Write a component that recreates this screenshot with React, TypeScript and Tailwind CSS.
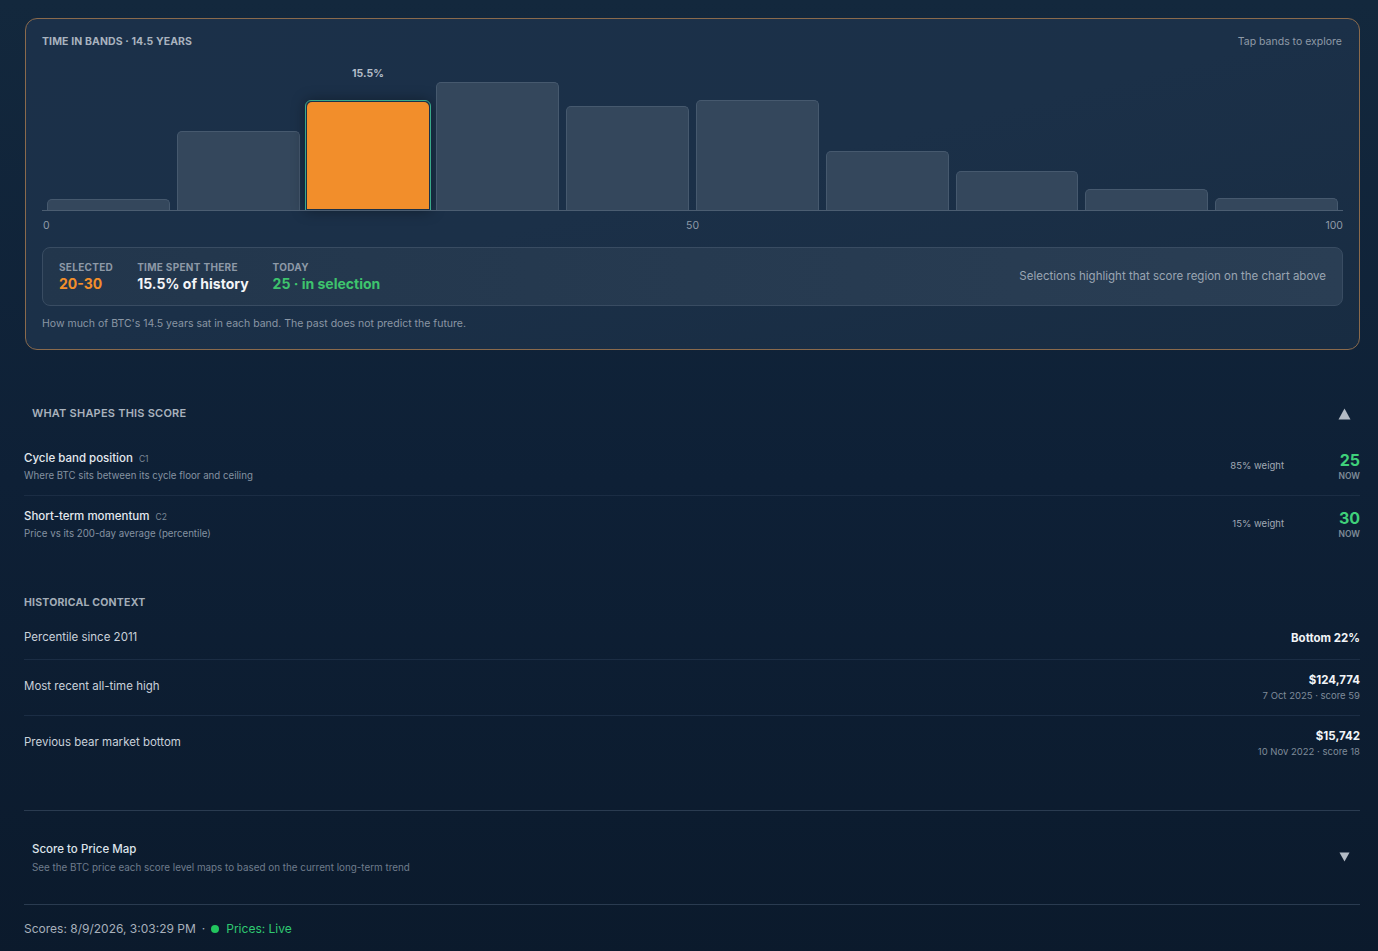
import React from "react";

const bands = [
  { h: 12 },
  { h: 80 },
  { h: 107, selected: true, label: "15.5%" },
  { h: 129 },
  { h: 105 },
  { h: 111 },
  { h: 60 },
  { h: 40 },
  { h: 22 },
  { h: 13 },
];

function Bands() {
  return (
    <div className="relative mt-[7px] h-[154px]">
      <div className="absolute inset-x-0 bottom-0 h-px bg-[#4b5d71]" />
      <div className="flex h-full items-end gap-[7px] px-[5px]">
        {bands.map((b, i) => (
          <div key={i} className="flex flex-1 flex-col items-center justify-end h-full">
            {b.label && (
              <div className="mb-[18px] text-[10.5px] font-bold text-[#b3bdc8]">{b.label}</div>
            )}
            {b.selected ? (
              <div className="w-[calc(100%+4px)] rounded-t-[6px] border border-[#3aa98a] p-[1px] shadow-[0_0_14px_rgba(0,0,0,0.35)]">
                <div className="rounded-t-[5px] bg-[#f28e2b]" style={{ height: b.h }} />
              </div>
            ) : (
              <div
                className="w-full rounded-t-[5px] border-t border-x border-[#46596e] bg-[#34475c]"
                style={{ height: b.h }}
              />
            )}
          </div>
        ))}
      </div>
    </div>
  );
}

function Factor({ name, code, desc, weight, value }: { name: string; code: string; desc: string; weight: string; value: string }) {
  return (
    <div className="flex items-center border-b border-[#1b2d44] py-3 last:border-b-0">
      <div className="flex-1">
        <div className="flex items-baseline gap-[6px] leading-4">
          <span className="text-[11.5px] font-medium text-[#e4e9ef]">{name}</span>
          <span className="text-[8.5px] text-[#7c8896]">{code}</span>
        </div>
        <div className="mt-[2px] text-[9.7px] leading-[14px] text-[#8592a1]">{desc}</div>
      </div>
      <div className="text-[9.5px] text-[#a1aab5]">{weight}</div>
      <div className="ml-[16px] w-[60px] text-right">
        <div className="text-[16px] font-bold leading-5 text-[#3fd07a]">{value}</div>
        <div className="text-[8.5px] font-semibold leading-3 text-[#7f8b98]">NOW</div>
      </div>
    </div>
  );
}

function HistRow({ label, value, sub, last }: { label: string; value: string; sub?: string; last?: boolean }) {
  return (
    <div className={`flex items-center justify-between py-3 ${last ? "" : "border-b border-[#1b2d44]"}`}>
      <div className="text-[11.5px] text-[#c9d1da]">{label}</div>
      <div className="text-right">
        <div className={`text-[11.5px] font-bold text-[#f1f4f7] ${sub ? "leading-4" : "leading-[18px]"}`}>{value}</div>
        {sub && <div className="mt-[1px] text-[9.5px] leading-[14px] text-[#7f8b99]">{sub}</div>}
      </div>
    </div>
  );
}

export default function App() {
  return (
    <div
      className="min-h-screen bg-gradient-to-b from-[#13283d] via-[#0e2036] to-[#0b1a2c] pl-6 pr-[18px] pt-[18px] pb-6 text-white"
      style={{ fontFamily: '"Inter", "Liberation Sans", Arial, sans-serif' }}
    >
      <div className="ml-px rounded-[12px] border border-[#8a6a4c] bg-gradient-to-br from-[#1b3049] via-[#1b3048] to-[#182c42] px-4 pt-[15px] pb-[17px]">
        <div className="flex items-center justify-between">
          <div className="text-[10.5px] font-bold uppercase tracking-[0.01em] text-[#a9b3bf]">
            Time in bands · 14.5 years
          </div>
          <div className="mr-[1px] text-[10.5px] text-[#8f9aa7]">Tap bands to explore</div>
        </div>

        <Bands />

        <div className="relative mt-[7px] h-[14px] text-[10.5px] text-[#8f9aa7]">
          <span className="absolute left-[1px]">0</span>
          <span className="absolute left-1/2 -translate-x-1/2">50</span>
          <span className="absolute right-0">100</span>
        </div>

        <div className="mt-[15px] flex h-[59px] items-center justify-between rounded-[8px] border border-[#394c62] bg-gradient-to-r from-[#22364c] to-[#2a3e54] px-4">
          <div className="flex gap-6">
            <div>
              <div className="text-[10px] font-bold uppercase leading-3 tracking-[0.03em] text-[#8d99a7]">Selected</div>
              <div className="mt-[3px] text-[14px] font-bold leading-4 text-[#f28e2b]">20-30</div>
            </div>
            <div>
              <div className="text-[10px] font-bold uppercase leading-3 tracking-[0.03em] text-[#8d99a7]">Time spent there</div>
              <div className="mt-[3px] text-[14px] font-bold leading-4 text-[#f3f5f8]">15.5% of history</div>
            </div>
            <div>
              <div className="text-[10px] font-bold uppercase leading-3 tracking-[0.03em] text-[#8d99a7]">Today</div>
              <div className="mt-[3px] text-[14px] font-bold leading-4 text-[#3ec46d]">25 · in selection</div>
            </div>
          </div>
          <div className="text-[11.5px] text-[#9aa5b2]">Selections highlight that score region on the chart above</div>
        </div>

        <div className="mt-[10px] text-[10.5px] text-[#8a96a4]">
          How much of BTC's 14.5 years sat in each band. The past does not predict the future.
        </div>
      </div>

      <div className="mt-[52px] flex h-6 items-center justify-between px-2">
        <div className="text-[11px] font-semibold uppercase tracking-[0.02em] text-[#a9b2bd]">What shapes this score</div>
        <svg width="13" height="12" viewBox="0 0 13 12" className="mr-[1px]">
          <path d="M6.5 0.5 L12.5 11.5 L0.5 11.5 Z" fill="#b3bbc5" />
        </svg>
      </div>

      <div className="mt-[12px]">
        <Factor
          name="Cycle band position"
          code="C1"
          desc="Where BTC sits between its cycle floor and ceiling"
          weight="85% weight"
          value="25"
        />
        <Factor
          name="Short-term momentum"
          code="C2"
          desc="Price vs its 200-day average (percentile)"
          weight="15% weight"
          value="30"
        />
      </div>

      <div className="mt-[43px] text-[10.5px] font-bold uppercase leading-[14px] tracking-[0.02em] text-[#a3adb8]">
        Historical context
      </div>
      <div className="mt-[7px]">
        <HistRow label="Percentile since 2011" value="Bottom 22%" />
        <HistRow label="Most recent all-time high" value="$124,774" sub="7 Oct 2025 · score 59" />
        <HistRow label="Previous bear market bottom" value="$15,742" sub="10 Nov 2022 · score 18" last />
      </div>

      <div className="mt-[39px] border-t border-[#2a3b50]" />
      <div className="flex h-[94px] items-center justify-between border-b border-[#2a3b50] px-2">
        <div>
          <div className="text-[11.5px] font-medium leading-4 text-[#dde3ea]">Score to Price Map</div>
          <div className="mt-[3px] text-[9.85px] leading-[14px] text-[#6f7c8c]">
            See the BTC price each score level maps to based on the current long-term trend
          </div>
        </div>
        <svg width="11" height="10" viewBox="0 0 11 10" className="mr-[2px]">
          <path d="M0.5 0.5 L10.5 0.5 L5.5 9.5 Z" fill="#b3bbc5" />
        </svg>
      </div>

      <div className="mt-4 flex items-center text-[12px] leading-4 text-[#a7b0bb]">
        <span>Scores: 8/9/2026, 3:03:29 PM</span>
        <span className="mx-[6px]">·</span>
        <span className="mr-[7px] inline-block h-2 w-2 rounded-full bg-[#22c55e]" />
        <span className="text-[#2fc971]">Prices: Live</span>
      </div>
    </div>
  );
}
